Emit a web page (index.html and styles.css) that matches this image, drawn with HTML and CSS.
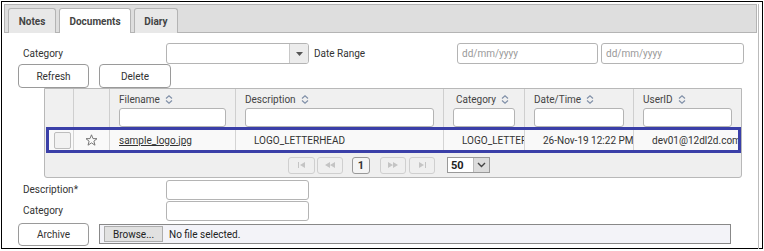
FILE: index.html
```html
<!DOCTYPE html>
<html>
<head>
<meta charset="utf-8">
<link rel="stylesheet" href="styles.css">
</head>
<body>
<div class="frame">
  <div class="content">
    <div class="tabbar">
      <div class="tab">Notes</div>
      <div class="tab active">Documents</div>
      <div class="tab">Diary</div>
    </div>

    <div class="filters">
      <span class="lbl w143">Category</span>
      <div class="select">
        <span class="sel-val"></span>
        <span class="sel-arrow"><svg width="7" height="4" viewBox="0 0 7 4"><path d="M0 0h7L3.5 4z" fill="#555"/></svg></span>
      </div>
      <span class="lbl daterange">Date Range</span>
      <div class="input date1">dd/mm/yyyy</div>
      <div class="input date2">dd/mm/yyyy</div>
    </div>

    <div class="btnrow">
      <button class="btn refresh">Refresh</button>
      <button class="btn delete">Delete</button>
    </div>

    <div class="grid">
      <div class="ghead">
        <div class="hc"></div>
        <div class="hc"></div>
        <div class="hc col"><span class="ht">Filename <svg class="sort" width="8" height="9" viewBox="0 0 8 9"><path d="M1 3.5L4 0.8 7 3.5M1 5.5L4 8.2 7 5.5" fill="none" stroke="#8090a8" stroke-width="1.2"/></svg></span><div class="finput"></div></div>
        <div class="hc col"><span class="ht">Description <svg class="sort" width="8" height="9" viewBox="0 0 8 9"><path d="M1 3.5L4 0.8 7 3.5M1 5.5L4 8.2 7 5.5" fill="none" stroke="#8090a8" stroke-width="1.2"/></svg></span><div class="finput"></div></div>
        <div class="hc col cat"><span class="ht">Category <svg class="sort" width="8" height="9" viewBox="0 0 8 9"><path d="M1 3.5L4 0.8 7 3.5M1 5.5L4 8.2 7 5.5" fill="none" stroke="#8090a8" stroke-width="1.2"/></svg></span><div class="finput"></div></div>
        <div class="hc col"><span class="ht">Date/Time <svg class="sort" width="8" height="9" viewBox="0 0 8 9"><path d="M1 3.5L4 0.8 7 3.5M1 5.5L4 8.2 7 5.5" fill="none" stroke="#8090a8" stroke-width="1.2"/></svg></span><div class="finput"></div></div>
        <div class="hc col last"><span class="ht">UserID <svg class="sort" width="8" height="9" viewBox="0 0 8 9"><path d="M1 3.5L4 0.8 7 3.5M1 5.5L4 8.2 7 5.5" fill="none" stroke="#8090a8" stroke-width="1.2"/></svg></span><div class="finput"></div></div>
      </div>
      <div class="grow">
        <div class="rc center"><span class="cb"></span></div>
        <div class="rc center"><svg width="13" height="12" viewBox="0 0 13 12"><path d="M6.5 0.8L8 4.6 12 4.7 8.9 7.2 10 11.2 6.5 8.9 3 11.2 4.1 7.2 1 4.7 5 4.6z" fill="none" stroke="#777" stroke-width="1"/></svg></div>
        <div class="rc fname"><a class="link">sample_logo.jpg</a></div>
        <div class="rc txt">LOGO_LETTERHEAD</div>
        <div class="rc txt">LOGO_LETTERHEAD</div>
        <div class="rc txt">26-Nov-19 12:22 PM</div>
        <div class="rc txt last">dev01@12dl2d.com</div>
      </div>
      <div class="gfoot">
        <span class="pb first dis"><svg width="8" height="6" viewBox="0 0 8 6"><path d="M0.5 0v6" stroke="#c4c4c4"/><path d="M7 0v6L2 3z" fill="#c4c4c4"/></svg></span>
        <span class="pb prev dis"><svg width="10" height="6" viewBox="0 0 10 6"><path d="M5 0v6L0 3zM10 0v6L5 3z" fill="#c4c4c4"/></svg></span>
        <span class="pb cur">1</span>
        <span class="pb next dis"><svg width="10" height="6" viewBox="0 0 10 6"><path d="M0 0v6L5 3zM5 0v6L10 3z" fill="#c4c4c4"/></svg></span>
        <span class="pb lastp dis"><svg width="8" height="6" viewBox="0 0 8 6"><path d="M1 0v6L6 3z" fill="#c4c4c4"/><path d="M7.5 0v6" stroke="#c4c4c4"/></svg></span>
        <span class="psize"><span class="pval">50</span><span class="parrow"><svg width="9" height="6" viewBox="0 0 9 6"><path d="M1 1l3.5 3.5L8 1" fill="none" stroke="#444" stroke-width="1.4"/></svg></span></span>
      </div>
    </div>

    <div class="frow r1">
      <span class="lbl w143">Description*</span>
      <div class="input plain"></div>
    </div>
    <div class="frow r2">
      <span class="lbl w143">Category</span>
      <div class="input plain"></div>
    </div>
    <div class="frow r3">
      <button class="btn archive">Archive</button>
      <div class="file">
        <span class="browse">Browse...</span>
        <span class="nofile">No file selected.</span>
      </div>
    </div>
  </div>
</div>
</body>
</html>
```

FILE: styles.css
```css
* { box-sizing: border-box; }
html, body { margin: 0; padding: 0; background: #fff; }
body {
  font-family: Roboto, "Liberation Sans", sans-serif;
  font-size: 10px;
  color: #333;
}
.frame {
  margin: 1px 0 0 1px;
  width: 762px;
  height: 248px;
  border: 1px solid #000;
}
.content {
  width: 757px;
  height: 246px;
  border-right: 1px solid #bbb;
}
.tabbar {
  margin: 2px 0 0 2px;
  width: 753px;
  height: 29px;
  background: #dedede;
  border: 1px solid #b4b4b4;
  display: flex;
  align-items: flex-end;
  padding-left: 3px;
  gap: 3px;
}
.tab {
  height: 25px;
  margin-bottom: -1px;
  border: 1px solid #b4b4b4;
  border-bottom: none;
  border-radius: 3px 3px 0 0;
  background: #e8e8e8;
  font-weight: bold;
  font-size: 10px;
  color: #444;
  display: flex;
  align-items: center;
  justify-content: center;
}
.tab:nth-child(1) { width: 48px; }
.tab:nth-child(2) { width: 72px; }
.tab:nth-child(3) { width: 44px; }
.tab.active { background: #fff; }

.filters {
  display: flex;
  align-items: center;
  margin-top: 10px;
  padding-left: 21px;
  height: 21px;
}
.lbl { display: inline-block; }
.w143 { width: 143px; }
.select {
  width: 143px;
  height: 21px;
  border: 1px solid #b4b4b4;
  border-radius: 3px;
  display: flex;
  overflow: hidden;
}
.sel-val { flex: 1; }
.sel-arrow {
  width: 19px;
  background: #ececec;
  border-left: 1px solid #c8c8c8;
  display: flex;
  align-items: center;
  justify-content: center;
}
.daterange { width: 148px; padding-left: 5px; }
.input {
  height: 21px;
  border: 1px solid #b4b4b4;
  border-radius: 3px;
  color: #999;
  padding-left: 4px;
  display: flex;
  align-items: center;
}
.date1 { width: 141px; margin-right: 3px; }
.date2 { width: 143px; }
.input.plain { width: 143px; }

.btnrow {
  display: flex;
  gap: 10px;
  padding-left: 16px;
  height: 24px;
}
.btn {
  font-family: inherit;
  font-size: 10px;
  color: #333;
  background: #fff;
  border: 1px solid #9a9a9a;
  border-radius: 4px;
  padding: 0;
  height: 24px;
}
.refresh { width: 71px; }
.delete { width: 72px; }
.archive { width: 71px; height: 23px; }

.grid {
  margin-left: 42px;
  width: 698px;
  height: 90px;
  border: 1px solid #b8b8b8;
  border-radius: 0 0 3px 3px;
  background: #efefef;
}
.ghead {
  display: grid;
  grid-template-columns: 29px 36px 126px 208px 81px 109px 107px;
  height: 38px;
  background: #f0f0f0;
}
.hc {
  border-right: 1px solid #cfcfcf;
  height: 38px;
}
.hc.last { border-right: none; }
.hc.col {
  padding: 4px 9px 0 9px;
  display: flex;
  flex-direction: column;
}
.ht {
  height: 14px;
  display: flex;
  align-items: center;
  gap: 5px;
  white-space: nowrap;
  color: #444;
}
.hc.cat .ht { padding-left: 3px; }
.sort { display: block; }
.finput {
  margin-top: 2px;
  height: 20px;
  background: #fff;
  border: 1px solid #b4b4b4;
  border-radius: 3px;
}
.grow {
  margin-left: 1px;
  width: 695px;
  height: 26px;
  border: 3px solid #3a3fa8;
  background: #f9f9f9;
  display: grid;
  grid-template-columns: 25px 36px 126px 208px 81px 109px 104px;
}
.rc {
  border-right: 1px solid #d4d4d4;
  height: 20px;
  display: flex;
  align-items: center;
  overflow: hidden;
  white-space: nowrap;
}
.rc.last { border-right: none; }
.rc.center { justify-content: center; }
.cb {
  width: 17px;
  height: 17px;
  border: 1px solid #bdbdbd;
  border-radius: 2px;
  background: #f2f2f2;
  margin-left: 2px;
}
.rc.fname { padding-left: 9px; }
.link { color: #333; text-decoration: underline; }
.rc.txt { padding-left: 18px; color: #333; }

.gfoot {
  height: 24px;
  display: flex;
  align-items: center;
  padding-left: 243px;
}
.pb {
  height: 17px;
  border: 1px solid #cfcfcf;
  border-radius: 3px;
  display: flex;
  align-items: center;
  justify-content: center;
  background: #efefef;
}
.first { width: 27px; }
.prev { width: 26px; margin-left: 2px; }
.cur { width: 18px; margin-left: 9px; border-color: #999; font-size: 11px; font-weight: bold; color: #333; background: #f4f4f4; }
.next { width: 26px; margin-left: 10px; }
.lastp { width: 26px; margin-left: 3px; }
.psize {
  margin-left: 12px;
  width: 43px;
  height: 16px;
  border: 1px solid #999;
  display: flex;
  background: #fff;
}
.pval { width: 25px; font-weight: bold; font-size: 11px; padding-left: 3px; color: #222; display: flex; align-items: center; }
.parrow { flex: 1; background: #dcdcdc; display: flex; align-items: center; justify-content: center; border-left: 1px solid #bbb; }

.frow {
  display: flex;
  align-items: center;
  padding-left: 21px;
}
.r1 { margin-top: 1px; height: 21px; }
.r2 { height: 21px; }
.r2 .input, .r1 .input { height: 20px; }
.r3 { padding-left: 16px; margin-top: 1px; height: 24px; }
.file {
  margin-left: 10px;
  width: 632px;
  height: 20px;
  border: 1px solid #888;
  background: #f3f3f8;
  display: flex;
  align-items: center;
  padding-left: 4px;
}
.browse {
  width: 59px;
  height: 16px;
  background: #e1e1e1;
  border: 1px solid #adadad;
  display: flex;
  align-items: center;
  justify-content: center;
  color: #222;
}
.nofile { margin-left: 6px; color: #222; }
```
